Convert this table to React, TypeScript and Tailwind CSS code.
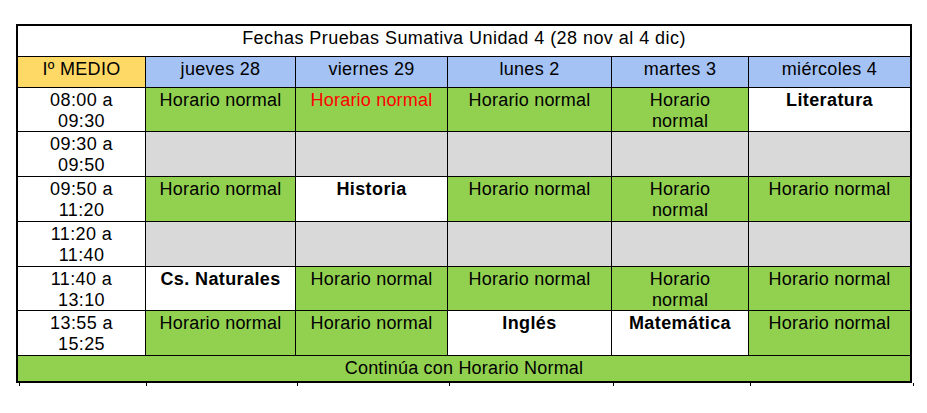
import React from 'react';

type Cell = {
  text?: string;
  kind: 'green' | 'white' | 'grey';
  bold?: boolean;
  red?: boolean;
};

const G = (red = false): Cell => ({ text: 'Horario normal', kind: 'green', red });
const W = (text: string): Cell => ({ text, kind: 'white', bold: true });
const GREY: Cell = { kind: 'grey' };

const days = ['jueves 28', 'viernes 29', 'lunes 2', 'martes 3', 'miércoles 4'];

const rows: { from: string; to: string; cells: Cell[] }[] = [
  { from: '08:00 a', to: '09:30', cells: [G(), G(true), G(), G(), W('Literatura')] },
  { from: '09:30 a', to: '09:50', cells: [GREY, GREY, GREY, GREY, GREY] },
  { from: '09:50 a', to: '11:20', cells: [G(), W('Historia'), G(), G(), G()] },
  { from: '11:20 a', to: '11:40', cells: [GREY, GREY, GREY, GREY, GREY] },
  { from: '11:40 a', to: '13:10', cells: [W('Cs. Naturales'), G(), G(), G(), G()] },
  { from: '13:55 a', to: '15:25', cells: [G(), G(), W('Inglés'), W('Matemática'), G()] },
];

const bgFor = (kind: Cell['kind']) => {
  switch (kind) {
    case 'green':
      return 'bg-[#92d050]';
    case 'grey':
      return 'bg-[#d9d9d9]';
    default:
      return 'bg-white';
  }
};

// little tick marks peeking out under the table
const stubs = [3, 126, 150, 151, 163, 136, 162];

const App: React.FC = () => {
  return (
    <div className="min-h-[413px] w-[927px] bg-white pt-[24px] font-['Liberation_Sans',Arial,sans-serif] text-black">
      <div className="ml-[16px] w-[896px] border-2 border-black bg-black">
        <div className="grid grid-cols-[127px_149px_151px_163px_136px_161px] grid-rows-[30px_30px_43px_44px_44px_44px_43px_44px_25px] gap-px">
          <div className="col-span-6 bg-white pt-[2px] text-center text-[18px] leading-[21px] tracking-[0.45px]">
            Fechas Pruebas Sumativa Unidad 4 (28 nov al 4 dic)
          </div>

          <div className="bg-[#ffd966] pt-[2px] text-center text-[18px] leading-[21px] tracking-[0.3px]">
            Iº MEDIO
          </div>
          {days.map((day) => (
            <div
              key={day}
              className="bg-[#a4c2f4] pt-[2px] text-center text-[18px] leading-[21px] tracking-[0.3px]"
            >
              {day}
            </div>
          ))}

          {rows.map((row) => (
            <React.Fragment key={row.from}>
              <div className="bg-white pt-[2px] text-center text-[18px] leading-[21px] tracking-[0.4px]">
                <div>{row.from}</div>
                <div>{row.to}</div>
              </div>
              {row.cells.map((cell, i) => (
                <div
                  key={i}
                  className={`${bgFor(cell.kind)} px-[10px] pt-[2px] text-center text-[18px] leading-[21px] ${
                    cell.bold ? 'font-bold tracking-[0.4px]' : 'tracking-[0.2px]'
                  } ${cell.red ? 'text-[#ff0000]' : ''}`}
                >
                  {cell.text}
                </div>
              ))}
            </React.Fragment>
          ))}

          <div className="col-span-6 flex items-center justify-center bg-[#92d050] text-[18px] leading-[21px] tracking-[0.2px]">
            Continúa con Horario Normal
          </div>
        </div>
      </div>

      <div className="ml-[16px] flex h-[3px]">
        {stubs.map((gap, i) => (
          <div key={i} className="flex">
            <div style={{ width: gap }} />
            <div className="w-px bg-black" />
          </div>
        ))}
      </div>
    </div>
  );
};

export default App;
